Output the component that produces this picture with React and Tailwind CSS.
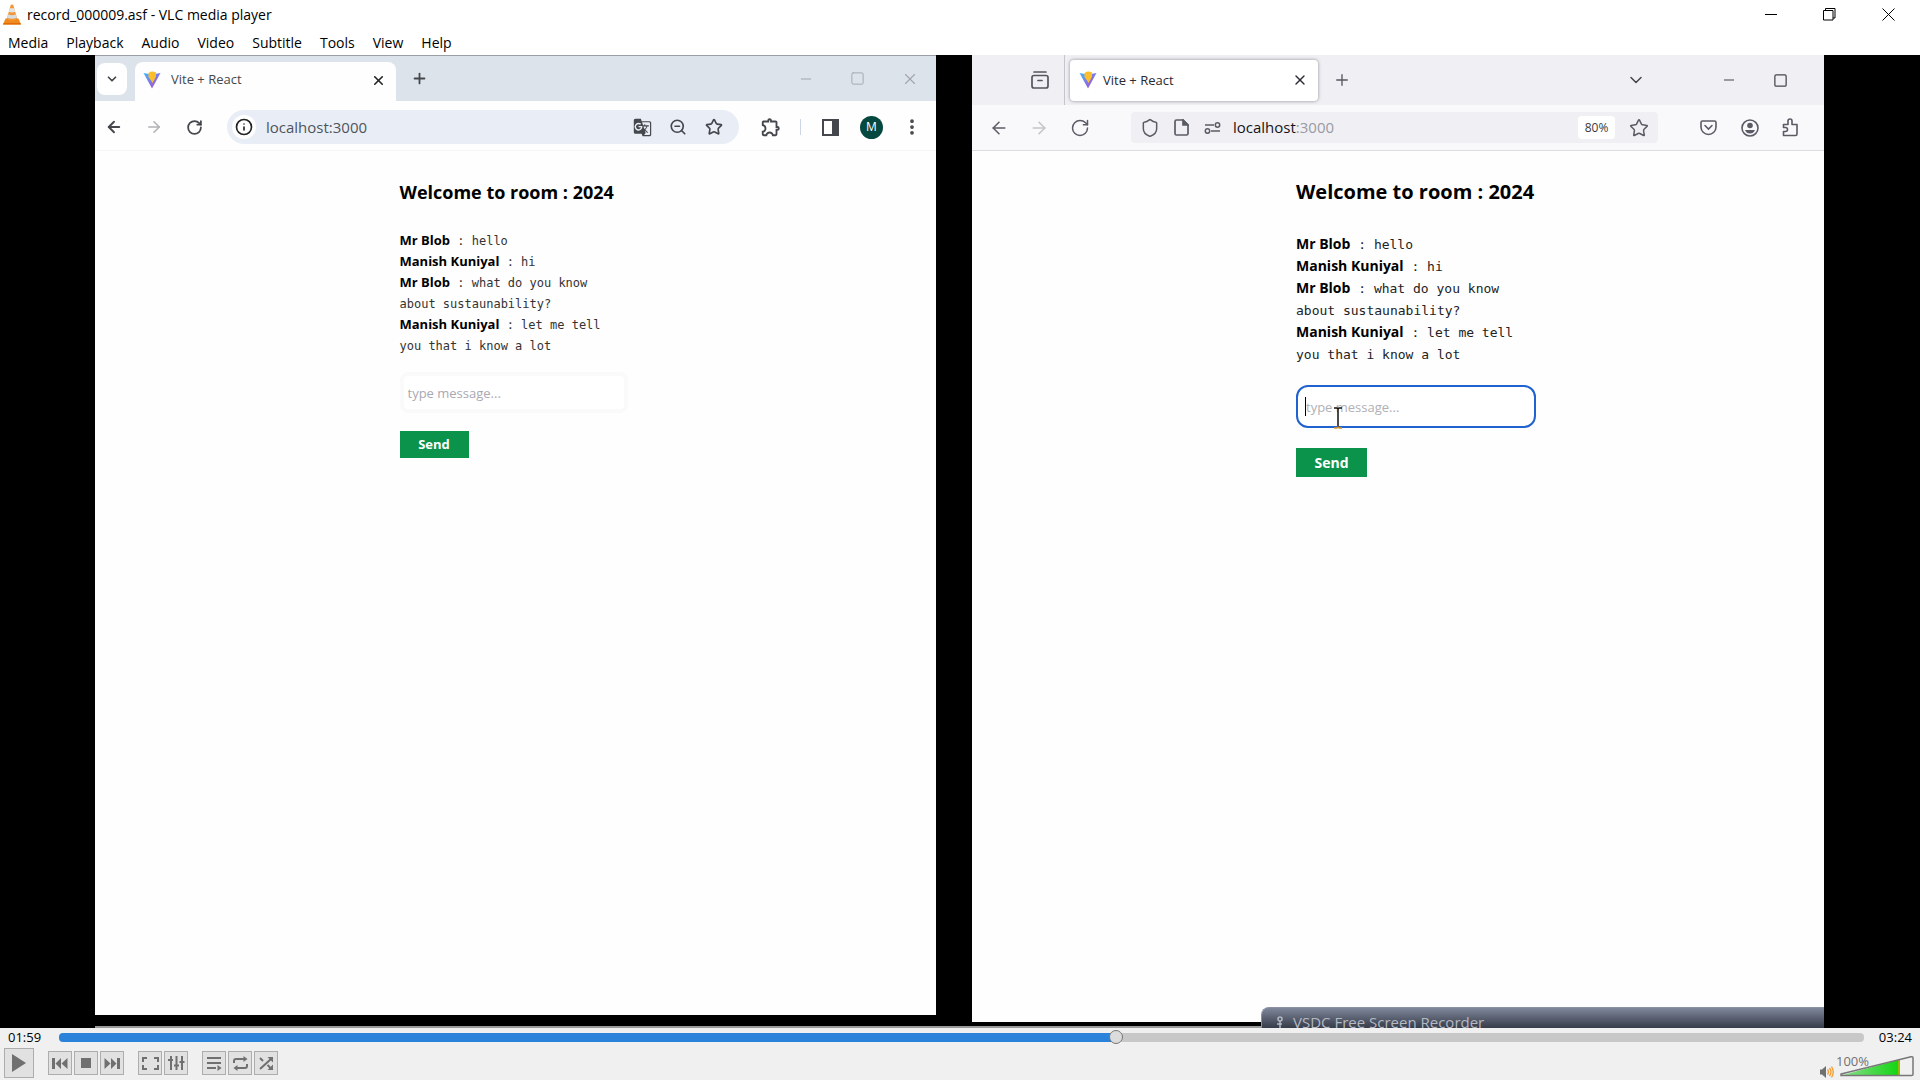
import React, { useState } from 'react';
import {
  Minus, Plus, X, Square, ChevronDown, ArrowLeft, ArrowRight, RotateCw, Info, Star,
  ZoomOut, EllipsisVertical, Shield,
} from 'lucide-react';
import { MdGTranslate, MdOutlineExtension } from 'react-icons/md';

const MENU = ['Media', 'Playback', 'Audio', 'Video', 'Subtitle', 'Tools', 'View', 'Help'];

const MESSAGES = [
  { from: 'Mr Blob', text: 'hello' },
  { from: 'Manish Kuniyal', text: 'hi' },
  { from: 'Mr Blob', text: 'what do you know about sustaunability?' },
  { from: 'Manish Kuniyal', text: 'let me tell you that i know a lot' },
];

const DURATION = 204;

const ConeIcon = () => (
  <svg className="h-[21px] w-[18px]" viewBox="0 0 18 21">
    <path d="M2.5 14.5h13L18 20.5H0z" fill="#f08a1c" />
    <path d="M7.8 0.8q1.2-.8 2.4 0L14.3 15q-5.3 3-10.6 0z" fill="#f3963a" />
    <path d="M6.8 4.2h4.4l1 3.6q-3.2 1.2-6.4 0z" fill="#e4e4e4" />
    <path d="M5 10.5q4 1.4 8 0l1 3.2q-5 2-10 0z" fill="#d8dcdf" />
    <path d="M0 20.5h18l-.5-1.5H.6z" fill="#e06b06" />
  </svg>
);

const ViteIcon = () => (
  <svg className="h-[18px] w-[18px] shrink-0" viewBox="0 0 18 18">
    <defs>
      <linearGradient id="vite" x1="0" y1="0" x2="1" y2="1">
        <stop offset="0" stopColor="#41b9ff" />
        <stop offset="0.6" stopColor="#8b6de0" />
        <stop offset="1" stopColor="#a05ad0" />
      </linearGradient>
    </defs>
    <path d="M0.5 2 9 3.5 17.5 2 9 17.5z" fill="url(#vite)" />
    <path d="M5.500 2q3.500-2.500 7.500-.5v4l-1.500 3L9.500 12 8 9.500 5.500 6z" fill="#fbbf2d" />
  </svg>
);

const Chat = ({ id, large, caret }) => {
  const [message, setMessage] = useState('');

  return (
    <div className={large ? 'w-60' : 'w-[228px]'}>
      <h1 className={large ? 'text-[20px] leading-7 font-bold' : 'text-[18px] leading-7 font-bold'}>
        Welcome to room : 2024
      </h1>
      <ul className={large ? 'mt-[27px] w-[225px] text-[14px] leading-[22px]' : 'mt-6 w-52 text-[13px] leading-[21px]'}>
        {MESSAGES.map((m, i) => (
          <li key={i}>
            <b className="leading-none">{m.from}</b>
            <span
              className={
                large
                  ? "font-['DejaVu_Sans_Mono',monospace] text-[13px] leading-none text-[#222]"
                  : "font-['DejaVu_Sans_Mono',monospace] text-[12px] leading-none text-[#333]"
              }
            >
              {' : '}{m.text}
            </span>
          </li>
        ))}
      </ul>
      <div className="relative">
        <input
          id={id}
          type="text"
          aria-label="Message"
          value={message}
          onChange={(e) => setMessage(e.target.value)}
          placeholder="type message..."
          className={
            large
              ? 'mt-5 block h-[43px] w-full rounded-xl border-2 border-[#1f62d0] bg-white px-2 text-[13px] placeholder-[#b0b0b6] outline-none'
              : 'mt-4 block h-[41px] w-full rounded-lg border-4 border-[#fafafb] bg-white px-1 text-[13px] placeholder-[#a9a9b2] outline-none'
          }
        />
        {caret && (
          <>
            <span className="absolute top-3 left-[9px] h-[19px] w-px bg-black" />
            <svg className="absolute top-[22px] left-[37px] h-[22px] w-[10px]" viewBox="0 0 10 22" fill="none" stroke="#111" strokeWidth="1.5">
              <path d="M1 1h3l1 1 1-1h3M5 2v18" />
              <path d="M1 21h3l1-1 1 1h3" stroke="#d9962f" />
            </svg>
          </>
        )}
      </div>
      <button
        type="button"
        className={
          large
            ? 'mt-5 h-[29px] w-[71px] bg-[#0b934c] text-[14px] font-bold text-white'
            : 'mt-[18px] h-[27px] w-[69px] bg-[#0b934c] text-[13px] font-bold text-white'
        }
      >
        Send
      </button>
    </div>
  );
};

const ChromeWindow = () => (
  <section className="mb-[11px] flex min-w-0 flex-[841] flex-col overflow-hidden bg-[#fefefe]">
    <div className="flex h-[46px] shrink-0 items-center border-t border-[#9a9ea6] bg-[#dde3eb] text-[#44474b]">
      <button type="button" aria-label="Search tabs" className="ml-[2px] flex h-8 w-[30px] items-center justify-center rounded-lg bg-white">
        <ChevronDown size={14} strokeWidth={3} />
      </button>
      <div className="ml-2 flex h-[39px] w-[261px] items-center self-end rounded-t-lg bg-[#fefefe] pr-[10px] pb-[3px] pl-2">
        <ViteIcon />
        <span className="ml-[10px] flex-1 text-[13px]">Vite + React</span>
        <button type="button" aria-label="Close tab" className="text-[#222]">
          <X size={15} strokeWidth={2.5} />
        </button>
      </div>
      <button type="button" aria-label="New tab" className="ml-[15px]">
        <Plus size={17} strokeWidth={2.5} />
      </button>
      <div className="mr-[17px] ml-auto flex items-center gap-9 text-[#a2a6ac]">
        <Minus size={16} strokeWidth={1.5} />
        <Square size={15} strokeWidth={1.5} />
        <X size={18} strokeWidth={1.5} />
      </div>
    </div>
    <div className="flex h-[50px] shrink-0 items-center border-b border-[#f6f6f8] bg-[#fefefe] pt-[3px] pr-[14px] pl-[10px] text-[#44474b]">
      <button type="button" aria-label="Back"><ArrowLeft size={18} strokeWidth={2.5} /></button>
      <button type="button" aria-label="Forward" className="ml-[22px] text-[#b0b2b5]"><ArrowRight size={18} strokeWidth={2} /></button>
      <button type="button" aria-label="Reload" className="ml-[23px]"><RotateCw size={17} strokeWidth={2.5} /></button>
      <div className="ml-6 flex h-[34px] min-w-0 flex-1 items-center rounded-full bg-[#e9eef6] pr-4 pl-[5px]">
        <span className="flex h-6 w-6 items-center justify-center rounded-full bg-white text-[#222]">
          <Info size={18} strokeWidth={2.2} />
        </span>
        <input
          type="text"
          aria-label="Address"
          defaultValue="localhost:3000"
          className="ml-[10px] min-w-0 flex-1 bg-transparent text-[15px] text-[#50545a] outline-none"
        />
        <MdGTranslate size={19} />
        <ZoomOut className="ml-[17px]" size={18} strokeWidth={2.2} />
        <Star className="ml-[18px]" size={18} strokeWidth={2.2} />
      </div>
      <MdOutlineExtension className="ml-[21px]" size={22} />
      <span className="ml-[18px] h-4 w-px bg-[#cdd6e8]" />
      <svg className="ml-[21px] h-[17px] w-[17px]" viewBox="0 0 17 17">
        <path d="M1 1h15v15H1z" fill="none" stroke="#44474b" strokeWidth="2" />
        <path d="M10 1h6v15h-6z" fill="#44474b" />
      </svg>
      <span className="ml-[21px] flex h-[23px] w-[23px] items-center justify-center rounded-full bg-[#05483f] text-[12px] text-white">M</span>
      <EllipsisVertical className="ml-[19px]" size={20} strokeWidth={2.5} />
    </div>
    <div className="flex flex-1 justify-center pt-[27px] pr-1">
      <Chat id="chrome-message" />
    </div>
  </section>
);

const FirefoxWindow = () => (
  <section className="mb-1 flex min-w-0 flex-[852] flex-col overflow-hidden bg-[#fefefe]">
    <div className="flex h-[50px] shrink-0 items-center bg-[#f0f0f4] text-[#55555f]">
      <svg className="ml-[59px] h-[18px] w-[18px]" viewBox="0 0 18 18" fill="none" stroke="currentColor" strokeWidth="1.7" strokeLinecap="round">
        <path d="M3 1h12" />
        <rect x="1" y="4.5" width="16" height="12.5" rx="2" />
        <path d="M7 9.500h4" />
      </svg>
      <span className="ml-[15px] h-full w-px bg-[#c4c4ca]" />
      <div className="ml-[5px] flex h-[41px] w-[248px] items-center rounded bg-white pr-[10px] pl-[9px] text-[#2a2a33] shadow-[0_0_3px_1px_#b4b4bb]">
        <ViteIcon />
        <span className="ml-[6px] flex-1 pt-[2px] text-[13px]">Vite + React</span>
        <button type="button" aria-label="Close tab"><X size={16} strokeWidth={2} /></button>
      </div>
      <button type="button" aria-label="New tab" className="ml-[15px]"><Plus size={18} strokeWidth={1.8} /></button>
      <div className="mr-[36px] ml-auto flex items-center text-[#44444c]">
        <ChevronDown size={20} strokeWidth={1.8} />
        <Minus className="ml-[75px]" size={16} strokeWidth={1.5} />
        <Square className="ml-9" size={15} strokeWidth={2} />
      </div>
    </div>
    <div className="flex h-[46px] shrink-0 items-center border-b border-[#dcdce0] bg-[#f9f9fc] pr-[25px] pl-[17px] text-[#5b5b66]">
      <button type="button" aria-label="Back"><ArrowLeft size={20} strokeWidth={1.8} /></button>
      <button type="button" aria-label="Forward" className="ml-5 text-[#c3c3c9]"><ArrowRight size={20} strokeWidth={1.8} /></button>
      <button type="button" aria-label="Reload" className="ml-[21px]"><RotateCw size={20} strokeWidth={1.8} /></button>
      <div className="ml-[41px] flex h-[31px] min-w-0 flex-1 items-center rounded bg-[#f0f0f4] pr-[9px] pl-[9px]">
        <Shield size={20} strokeWidth={1.8} />
        <svg className="ml-[14px] h-[17px] w-[15px]" viewBox="0 0 15 17" fill="none" stroke="currentColor" strokeWidth="1.7">
          <path d="M2.500 1H9l5 5v8.500q0 1.500-1.500 1.500h-10Q1 16 1 14.500v-12Q1 1 2.500 1z" />
          <path d="M9 1v5h5z" fill="currentColor" />
        </svg>
        <svg className="ml-[15px] h-3 w-[17px]" viewBox="0 0 17 12" fill="none" stroke="currentColor" strokeWidth="1.5">
          <circle cx="13.5" cy="3" r="2.2" />
          <circle cx="3.5" cy="9" r="2.2" />
          <path d="M1 3h9M7 9h9" />
        </svg>
        <span className="ml-3 flex-1 text-[15px] text-[#15141a]">
          localhost<span className="text-[#9a9aa2]">:3000</span>
        </span>
        <button type="button" className="h-[23px] w-[37px] rounded-sm bg-white text-[12px] text-[#3a3a42]">80%</button>
        <Star className="ml-[14px]" size={20} strokeWidth={1.8} />
      </div>
      <svg className="ml-[42px] h-[17px] w-[17px]" viewBox="0 0 17 17" fill="none" stroke="currentColor" strokeWidth="1.6">
        <path d="M2.5 2h12q1.5 0 1.500 1.5V8A7.500 7.500 0 0 1 1 8V3.5Q1 2 2.5 2zM5 6.5l3.5 3.5L12 6.5" strokeLinecap="round" />
      </svg>
      <svg className="ml-6 h-[18px] w-[18px]" viewBox="0 0 18 18" fill="none" stroke="currentColor" strokeWidth="1.6">
        <circle cx="9" cy="9" r="8" />
        <circle cx="9" cy="6.500" r="2.800" fill="currentColor" stroke="none" />
        <path d="M4 11h10q-1.500 3.500-5 3.500T4 11z" fill="currentColor" stroke="none" />
      </svg>
      <svg className="ml-[23px] h-[19px] w-[17px]" viewBox="0 0 17 19" fill="none" stroke="currentColor" strokeWidth="1.6">
        <path d="M1.5 17.5v-4h2a2 2 0 0 0 0-4h-2v-3h4.5V3a2 2 0 0 1 4 0v3.5h5v9.5q0 1.5-1.500 1.5z" strokeLinejoin="round" />
      </svg>
    </div>
    <div className="flex flex-1 justify-center pt-[27px] pl-9">
      <Chat id="firefox-message" large caret />
    </div>
  </section>
);

const ControlButton = ({ label, big, children }) => (
  <button
    type="button"
    aria-label={label}
    className={`flex items-center justify-center border border-[#adadad] bg-[#e1e1e1] text-[#707070] ${big ? 'h-[30px] w-[30px]' : 'h-6 w-6'}`}
  >
    {children}
  </button>
);

const Controls = () => {
  const [time, setTime] = useState(119.6);
  const [volume, setVolume] = useState(100);
  const played = (time / DURATION) * 100;

  return (
    <footer className="flex h-[52px] shrink-0 flex-col bg-[#f0f0f0] px-1">
      <div className="flex h-[18px] items-center text-[13px] leading-[18px]">
        <span className="w-[55px] pl-1">01:59</span>
        <input
          type="range"
          aria-label="Seek"
          min="0"
          max={DURATION}
          step="any"
          value={time}
          onChange={(e) => setTime(Number(e.target.value))}
          style={{ backgroundImage: `linear-gradient(to right, #2a82da ${played}%, transparent ${played}%)` }}
          className="h-[9px] min-w-0 flex-1 appearance-none rounded-sm bg-[#c8c8c8] [&::-webkit-slider-thumb]:h-[14px] [&::-webkit-slider-thumb]:w-[14px] [&::-webkit-slider-thumb]:appearance-none [&::-webkit-slider-thumb]:rounded-full [&::-webkit-slider-thumb]:border [&::-webkit-slider-thumb]:border-[#777] [&::-webkit-slider-thumb]:bg-[#dcdcdc]"
        />
        <span className="w-[52px] pr-1 text-right">03:24</span>
      </div>
      <div className="flex items-center pt-[2px]">
        <ControlButton label="Play" big>
          <svg className="h-[18px] w-[14px]" viewBox="0 0 14 18"><path d="M0 0 14 9 0 18z" fill="currentColor" /></svg>
        </ControlButton>
        <div className="ml-[14px] flex gap-[2px]">
          <ControlButton label="Previous">
            <svg className="h-[11px] w-4" viewBox="0 0 16 11" fill="currentColor"><path d="M0 0h3v11H0zM9 0v11L3.5 5.5zM15.5 0v11L9.5 5.5z" /></svg>
          </ControlButton>
          <ControlButton label="Stop"><span className="h-[10px] w-[10px] bg-[#707070]" /></ControlButton>
          <ControlButton label="Next">
            <svg className="h-[11px] w-4" viewBox="0 0 16 11" fill="currentColor"><path d="M13 0h3v11h-3zM7 0v11l5.5-5.5zM.5 0v11l6-5.5z" /></svg>
          </ControlButton>
        </div>
        <div className="ml-[14px] flex gap-[2px]">
          <ControlButton label="Fullscreen">
            <svg className="h-[13px] w-[17px]" viewBox="0 0 17 13" fill="none" stroke="currentColor" strokeWidth="2"><path d="M1 5V1h4M12 1h4v4M16 8v4h-4M5 12H1V8" /></svg>
          </ControlButton>
          <ControlButton label="Extended settings">
            <svg className="h-[14px] w-[17px]" viewBox="0 0 17 14" fill="none" stroke="currentColor" strokeWidth="2"><path d="M3 0v14M8.5 0v14M14 0v14M0 4h5M6 9.5h5M11.5 6h5" /></svg>
          </ControlButton>
        </div>
        <div className="ml-[14px] flex gap-[2px]">
          <ControlButton label="Playlist">
            <svg className="h-[15px] w-[15px]" viewBox="0 0 15 15" fill="none" stroke="currentColor" strokeWidth="2"><path d="M0 2h14M0 7h14M0 12h9" /><path d="M10.5 9v6l4-3z" fill="currentColor" stroke="none" /></svg>
          </ControlButton>
          <ControlButton label="Loop">
            <svg className="h-[15px] w-[15px]" viewBox="0 0 15 15" fill="none" stroke="currentColor" strokeWidth="2">
              <path d="M1 7V5q0-2 2-2h8M14 8v2q0 2-2 2H4" />
              <path d="M10.500 0v6l4-3zM4.500 9v6l-4-3z" fill="currentColor" stroke="none" />
            </svg>
          </ControlButton>
          <ControlButton label="Random">
            <svg className="h-[15px] w-[15px]" viewBox="0 0 15 15" fill="none" stroke="currentColor" strokeWidth="2">
              <path d="M1 2l3 3M1 13 12 3M8.500 9l3.500 3.500" />
              <path d="M8.500 1h5.500v5.500zM8.500 14h5.500V8.500z" fill="currentColor" stroke="none" />
            </svg>
          </ControlButton>
        </div>
        <svg className="ml-auto h-3 w-[14px] self-end" viewBox="0 0 14 12" fill="none">
          <path d="M0 3.500h2L6 0v12L2 8.500H0z" fill="#707070" />
          <path d="M7.500 3.500q2 2.500 0 5M9.500 2q3 4 0 8M11.500 .5q3.500 5.500 0 11" stroke="#f39a2d" strokeWidth="1.3" />
        </svg>
        <div className="relative ml-[6px] h-[22px] w-[76px] self-end">
          <svg className="h-full w-full" viewBox="0 0 76 22">
            <defs>
              <linearGradient id="vol" x1="0" x2="1"><stop offset="0" stopColor="#8fdc8f" /><stop offset="1" stopColor="#0fd60f" /></linearGradient>
            </defs>
            <path d="M1 19.500 60 3.500v16z" fill="url(#vol)" />
            <path d="M58 4l2-.5v16h-2z" fill="#9ab80a" />
            <path d="M1 18 71 .8q2-.3 2 1v16.400q0 1.300-1.300 1.300H1z" fill="none" stroke="#777" strokeWidth="1.5" />
          </svg>
          <span className="absolute -top-[2px] -left-1 text-[13px] leading-[14px] text-[#707070]">{volume}%</span>
          <input
            type="range"
            aria-label="Volume"
            min="0"
            max="125"
            value={volume}
            onChange={(e) => setVolume(Number(e.target.value))}
            className="absolute inset-0 w-full opacity-0"
          />
        </div>
      </div>
    </footer>
  );
};

const App = () => (
  <div className="flex h-screen flex-col overflow-hidden bg-white font-['Open_Sans','Noto_Sans',sans-serif] text-black">
    <header className="h-[55px] shrink-0">
      <div className="flex h-7 items-center pl-[3px]">
        <ConeIcon />
        <h1 className="ml-[6px] text-[14px]">record_000009.asf - VLC media player</h1>
        <div className="mr-[25px] ml-auto flex items-center gap-[46px]">
          <button type="button" aria-label="Minimize">
            <svg className="h-[13px] w-3" viewBox="0 0 12 13" stroke="#000"><path d="M0 6.5h12" /></svg>
          </button>
          <button type="button" aria-label="Restore">
            <svg className="h-[13px] w-[13px]" viewBox="0 0 13 13" fill="none" stroke="#000"><path d="M.5 2.5h9.5v9.5H.5zM2.5 2.5V.5h9.5v9.5h-2" /></svg>
          </button>
          <button type="button" aria-label="Close">
            <svg className="h-[13px] w-[13px]" viewBox="0 0 13 13" stroke="#000"><path d="m.5.5 12 12M12.5.5l-12 12" /></svg>
          </button>
        </div>
      </div>
      <nav className="flex gap-[18px] pt-[2px] pl-2 text-[14px]">
        {MENU.map((item) => (
          <button key={item} type="button" className="h-[25px] leading-[25px]">{item}</button>
        ))}
      </nav>
    </header>

    <main className="relative flex min-h-0 flex-1 flex-col overflow-hidden bg-black pr-24 pl-[95px]">
      <div className="flex min-h-0 flex-1 gap-9">
        <ChromeWindow />
        <FirefoxWindow />
      </div>
      <div className="h-[2px] shrink-0 bg-[#9a9a9a]" />
      {/* recorder title bar peeking over the bottom edge */}
      <div className="absolute right-24 bottom-0 flex h-[21px] w-[563px] items-start overflow-hidden rounded-tl-lg border-t border-l border-[#8a91a3] bg-linear-to-b from-[#7f889c] to-[#373c49] pl-[14px] text-[#b4b9c4]">
        <svg className="mt-2 h-[13px] w-2" viewBox="0 0 8 13" fill="none" stroke="currentColor" strokeWidth="1.5"><circle cx="4" cy="3" r="2" /><path d="M4 5v8M1 8h5" /></svg>
        <span className="ml-[9px] pt-[2px] text-[15px] leading-6">VSDC Free Screen Recorder</span>
      </div>
    </main>

    <Controls />
  </div>
);

export default App;
